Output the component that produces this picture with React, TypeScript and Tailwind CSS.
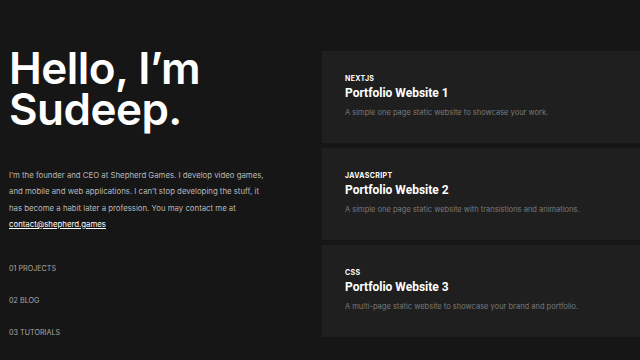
import React from 'react'

const projects = [
  { tag: 'NEXTJS', title: 'Portfolio Website 1', desc: 'A simple one page static website to showcase your work.' },
  { tag: 'JAVASCRIPT', title: 'Portfolio Website 2', desc: 'A simple one page static website with transistions and animations.' },
  { tag: 'CSS', title: 'Portfolio Website 3', desc: 'A multi-page static website to showcase your brand and portfolio.' },
]

const links = ['01 PROJECTS', '02 BLOG', '03 TUTORIALS']

export default function App() {
  return (
    <div className="w-[640px] h-[360px] overflow-hidden bg-[#161616] text-white flex font-['Inter',sans-serif]">
      {/* Intro */}
      <div className="w-[322px] shrink-0 pl-[9px] pt-[48px]">
        <h1 className="text-[44px] leading-[41px] font-[560] tracking-[-0.012em] text-white">
          Hello, I’m
          <br />
          Sudeep.
        </h1>
        <p className="mt-[37px] text-[7.8px] leading-[16.3px] text-[#b8b8b8] w-[262px]">
          I’m the founder and CEO at Shepherd Games. I develop video games, and mobile and web applications. I can’t stop developing the stuff, it has become a habit later a profession. You may contact me at{' '}
          <a href="#" className="text-white underline">contact@shepherd.games</a>
        </p>
        <nav className="mt-[33px] flex flex-col gap-[25px]">
          {links.map((l) => (
            <a key={l} href="#" className="text-[7.2px] leading-[7px] text-[#a8a8a8]">{l}</a>
          ))}
        </nav>
      </div>

      {/* Projects */}
      <div className="flex-1 pt-[51px] flex flex-col gap-[5px]">
        {projects.map((p) => (
          <div key={p.title} className="h-[92px] bg-[#1f1f1f] pl-[23px] pt-[23px]">
            <div className="text-[7px] font-bold tracking-[0.05em] text-white leading-[9px]">{p.tag}</div>
            <div className="mt-[3px] text-[12px] font-bold leading-[15px] font-['Roboto',sans-serif] text-white">{p.title}</div>
            <div className="mt-[7px] text-[7.5px] leading-[10px] text-[#7a7a7a]">{p.desc}</div>
          </div>
        ))}
      </div>
    </div>
  )
}
